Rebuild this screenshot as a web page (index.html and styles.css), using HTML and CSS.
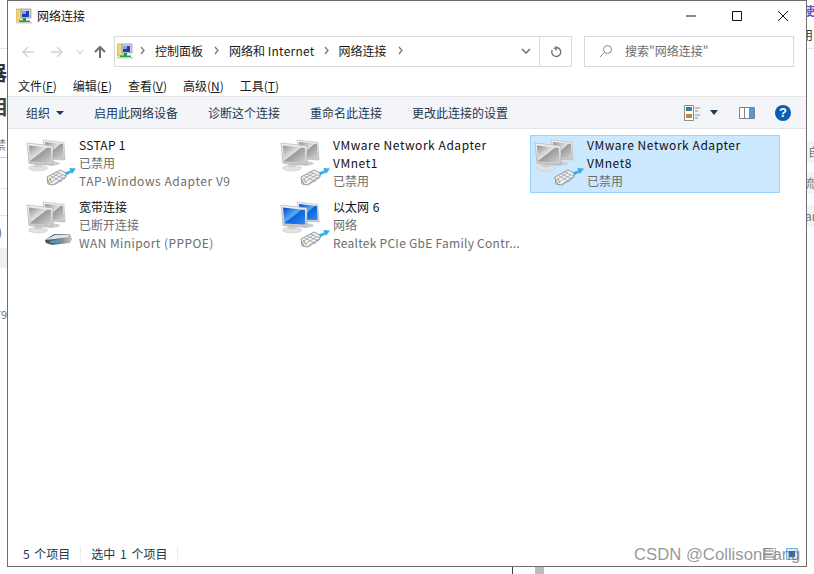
FILE: index.html
```html
<!DOCTYPE html>
<html lang="zh-CN">
<head>
<meta charset="utf-8">
<title>网络连接</title>
<link rel="stylesheet" href="styles.css">
</head>
<body>
<svg class="defs" width="0" height="0" aria-hidden="true">
  <defs>
    <linearGradient id="gScreen" x1="0" y1="0" x2="1" y2="1"><stop offset="0" stop-color="#8f8f8f"/><stop offset=".45" stop-color="#e2e2e2"/><stop offset=".5" stop-color="#9a9a9a"/><stop offset="1" stop-color="#d0d0d0"/></linearGradient>
    <linearGradient id="gBlue" x1="0" y1="0" x2="1" y2="1"><stop offset="0" stop-color="#0a3fd0"/><stop offset=".45" stop-color="#4fb0f5"/><stop offset=".52" stop-color="#0f62e0"/><stop offset="1" stop-color="#2b8df0"/></linearGradient>
    <linearGradient id="gFrame" x1="0" y1="0" x2="0" y2="1"><stop offset="0" stop-color="#f2f2f2"/><stop offset="1" stop-color="#c6c6c6"/></linearGradient>
    <linearGradient id="gModem" x1="0" y1="0" x2="1" y2="0"><stop offset="0" stop-color="#3d4a55"/><stop offset=".55" stop-color="#77838c"/><stop offset="1" stop-color="#c2c6c9"/></linearGradient>
    <symbol id="mons-gray" viewBox="0 0 54 54">
      <ellipse cx="30" cy="28.5" rx="8" ry="2.2" fill="#cfcfcf"/>
      <path d="M21 5 42 7.500 43 25 24 24Z" fill="url(#gFrame)" stroke="#b5b5b5" stroke-width=".6"/>
      <path d="M23 7 41 9 41.500 23 25 22.500Z" fill="url(#gScreen)"/>
      <ellipse cx="16" cy="33" rx="9.500" ry="3" fill="#e2e2e2" stroke="#c4c4c4" stroke-width=".5"/>
      <path d="M13 28h6l1 4h-8Z" fill="#cfcfcf"/>
      <path d="M5 8 31 11 31 30 7 28.500Z" fill="url(#gFrame)" stroke="#aaa" stroke-width=".6"/>
      <path d="M7 10.500 29 13 29 27.500 8.500 26.500Z" fill="url(#gScreen)"/>
    </symbol>
    <symbol id="mons-blue" viewBox="0 0 54 54">
      <ellipse cx="30" cy="28.5" rx="8" ry="2.2" fill="#cfcfcf"/>
      <path d="M21 5 42 7.500 43 25 24 24Z" fill="url(#gFrame)" stroke="#b5b5b5" stroke-width=".6"/>
      <path d="M23 7 41 9 41.500 23 25 22.500Z" fill="url(#gBlue)"/>
      <ellipse cx="16" cy="33" rx="9.500" ry="3" fill="#e2e2e2" stroke="#c4c4c4" stroke-width=".5"/>
      <path d="M13 28h6l1 4h-8Z" fill="#cfcfcf"/>
      <path d="M5 8 31 11 31 30 7 28.500Z" fill="url(#gFrame)" stroke="#aaa" stroke-width=".6"/>
      <path d="M7 10.500 29 13 29 27.500 8.500 26.500Z" fill="url(#gBlue)"/>
    </symbol>
    <symbol id="plug" viewBox="0 0 54 54">
      <path d="M41 38 48 35.500 47.500 33 54 33.500 50 39 49.500 37.500 43 41Z" fill="#3aaee8"/>
      <path d="M25 42 38 35 44 38 44 42 32 50 26 49Z" fill="#f1f4f6" stroke="#76828a" stroke-width=".8"/>
      <path d="M28 40.500 40 47M31 39 43 44M34 37 44 41M29 47 41 39.500M27 44.500 38 37.500M32 49 43 42" stroke="#8d99a1" stroke-width=".7" fill="none"/>
      <path d="M25.500 44 28 49M27.500 43 30 48" stroke="#b88f28" stroke-width=".9" fill="none"/>
    </symbol>
    <symbol id="modem" viewBox="0 0 54 54">
      <path d="M23 43 32 37 48 37 50 42 48 46 30 48 24 46Z" fill="url(#gModem)"/>
      <path d="M23 43 33 38 46 38 47 40 32 42 Z" fill="#dfe4e7"/>
      <path d="M28 44 40 43 40 45 29 46Z" fill="#4aa2c9"/>
    </symbol>
    <symbol id="netfolder" viewBox="0 0 16 16">
      <path d="M0 1h6l1 1h2v11H0Z" fill="#ecd67c" stroke="#b3a057" stroke-width=".6"/>
      <path d="M5 1h10v9H5Z" fill="#cfd3d8" stroke="#8b8f96" stroke-width=".7"/>
      <path d="M6 3h7v6H6Z" fill="#1f3fb8"/>
      <path d="M6 3h4v3H6Z" fill="#7ea3e6"/>
      <path d="M7 10h3v3H7Z" fill="#1e9a3c"/>
      <path d="M3 12.500h11V15H3Z" fill="#1aa845"/>
      <path d="M0 14h16v1.500H0Z" fill="#c9cdc8"/>
    </symbol>
  </defs>
</svg>

<div class="desktop">
  <div class="bg bg-left">
    <span class="frag frag-a">器</span>
    <span class="frag frag-b">相</span>
    <span class="frag frag-c">禁</span>
    <span class="frag frag-d">)</span>
    <span class="frag frag-e">79</span>
    <i class="rule rule-1"></i><i class="rule rule-2"></i><i class="rule rule-3"></i><i class="rule rule-4"></i>
    <i class="strip"></i>
  </div>
  <div class="bg bg-right">
    <span class="frag r-a">使</span>
    <span class="frag r-b">用</span>
    <i class="rule rule-r"></i>
    <span class="chip r-c">自</span>
    <span class="chip r-d">流</span>
    <span class="chip r-e">an</span>
  </div>
  <i class="stub-line"></i><i class="stub-block"></i>

  <main class="window">
    <header class="titlebar">
      <svg class="ico16"><use href="#netfolder"/></svg>
      <span class="title">网络连接</span>
      <div class="caption">
        <svg class="cap" viewBox="0 0 46 30"><path d="M18 15h10" stroke="#111" stroke-width="1"/></svg>
        <svg class="cap" viewBox="0 0 46 30"><path d="M18.500 10.500h9v9h-9z" fill="none" stroke="#111" stroke-width="1"/></svg>
        <svg class="cap" viewBox="0 0 46 30"><path d="M18 10l10 10M28 10 18 20" stroke="#111" stroke-width="1" fill="none"/></svg>
      </div>
    </header>

    <div class="navrow">
      <div class="navbtns">
        <svg class="nav" viewBox="0 0 16 16"><path d="M14 8H3M8 3 3 8l5 5" fill="none" stroke="#d4d4d4" stroke-width="1.500"/></svg>
        <svg class="nav" viewBox="0 0 16 16"><path d="M2 8h11M8 3l5 5-5 5" fill="none" stroke="#d4d4d4" stroke-width="1.500"/></svg>
        <svg class="nav-small" viewBox="0 0 8 8"><path d="M1 2.500 4 5.500 7 2.500" fill="none" stroke="#d4d4d4" stroke-width="1.200"/></svg>
        <svg class="nav" viewBox="0 0 16 16"><path d="M8 14V3M3 8l5-5 5 5" fill="none" stroke="#6e6e6e" stroke-width="2"/></svg>
      </div>
      <div class="addr">
        <svg class="ico16 addr-ico"><use href="#netfolder"/></svg>
        <svg class="chev"><path d="M2 1l3 3.500L2 8" fill="none" stroke="#7a7a7a" stroke-width="1.300"/></svg>
        <span class="crumb">控制面板</span>
        <svg class="chev"><path d="M2 1l3 3.500L2 8" fill="none" stroke="#7a7a7a" stroke-width="1.300"/></svg>
        <span class="crumb crumb-net">网络和 <span class="tracked">Internet</span></span>
        <svg class="chev"><path d="M2 1l3 3.500L2 8" fill="none" stroke="#7a7a7a" stroke-width="1.300"/></svg>
        <span class="crumb">网络连接</span>
        <svg class="chev"><path d="M2 1l3 3.500L2 8" fill="none" stroke="#7a7a7a" stroke-width="1.300"/></svg>
        <span class="grow"></span>
        <svg class="dropdown" viewBox="0 0 10 6"><path d="M1 1l4 4 4-4" fill="none" stroke="#6e6e6e" stroke-width="1.500"/></svg>
        <span class="refresh"><svg class="refresh-ico" viewBox="0 0 12 12"><path d="M6.500 1.500A4.500 4.500 0 1 1 2.200 4M6 0v3.500L3.800 1.800" fill="none" stroke="#6e6e6e" stroke-width="1.300"/></svg></span>
      </div>
      <div class="search">
        <svg class="search-ico" viewBox="0 0 14 14"><circle cx="8.500" cy="5.500" r="4" fill="none" stroke="#8a8a8a"/><path d="M5.500 8.500 1 13" stroke="#8a8a8a" fill="none"/></svg>
        <span>搜索"网络连接"</span>
      </div>
    </div>

    <nav class="menubar">
      <span>文件(<u>F</u>)</span><span>编辑(<u>E</u>)</span><span>查看(<u>V</u>)</span><span>高级(<u>N</u>)</span><span>工具(<u>T</u>)</span>
    </nav>

    <div class="toolbar">
      <span class="tool tool-org">组织<i class="caret"></i></span>
      <span class="tool">启用此网络设备</span>
      <span class="tool">诊断这个连接</span>
      <span class="tool">重命名此连接</span>
      <span class="tool">更改此连接的设置</span>
      <span class="grow"></span>
      <svg class="view-ico" viewBox="0 0 16 16"><path d="M.5.500h9v15h-9z" fill="#fff" stroke="#8d8d8d"/><path d="M2 2h6v4H2z" fill="#3e7f9f"/><path d="M2 9h3v4H2z" fill="#d9842e"/><path d="M5 9h3v4H5z" fill="#7da63c"/><path d="M11 3h5M11 6h3M11 10h5M11 13h3" stroke="#8d8d8d"/></svg>
      <i class="caret caret-view"></i>
      <svg class="pane-ico" viewBox="0 0 16 12"><path d="M.5.500h15v11H.5z" fill="#fff" stroke="#848484"/><path d="M5.500 1v10" stroke="#848484"/><path d="M10 1h5v10h-5z" fill="#4a9be2"/></svg>
      <span class="help">?</span>
    </div>

    <section class="items">
      <article class="item">
        <span class="iconbox"><svg class="big"><use href="#mons-gray"/></svg><svg class="big over"><use href="#plug"/></svg></span>
        <div class="text"><div class="name tracked-s">SSTAP 1</div><div class="sub">已禁用</div><div class="sub tracked">TAP-Windows Adapter V9</div></div>
      </article>
      <article class="item">
        <span class="iconbox"><svg class="big"><use href="#mons-gray"/></svg><svg class="big over"><use href="#plug"/></svg></span>
        <div class="text"><div class="name tracked">VMware Network Adapter VMnet1</div><div class="sub">已禁用</div></div>
      </article>
      <article class="item selected">
        <span class="iconbox"><svg class="big"><use href="#mons-gray"/></svg><svg class="big over"><use href="#plug"/></svg></span>
        <div class="text"><div class="name tracked">VMware Network Adapter VMnet8</div><div class="sub">已禁用</div></div>
      </article>
      <article class="item">
        <span class="iconbox"><svg class="big"><use href="#mons-gray"/></svg><svg class="big over"><use href="#modem"/></svg></span>
        <div class="text"><div class="name">宽带连接</div><div class="sub">已断开连接</div><div class="sub tracked-m">WAN Miniport (PPPOE)</div></div>
      </article>
      <article class="item">
        <span class="iconbox"><svg class="big"><use href="#mons-blue"/></svg><svg class="big over"><use href="#plug"/></svg></span>
        <div class="text"><div class="name name-spaced">以太网 6</div><div class="sub">网络</div><div class="sub tracked-s">Realtek PCIe GbE Family Contr...</div></div>
      </article>
    </section>

    <footer class="status">
      <span class="st st-1">5 个项目</span>
      <span class="st st-2">选中 1 个项目</span>
      <span class="grow"></span>
      <svg class="st-view" viewBox="0 0 13 12"><path d="M.5.500h12v11H.5z" fill="#fff" stroke="#b5b5b5"/><path d="M2 3h9M2 6h9M2 9h9" stroke="#7f7f7f"/></svg>
      <svg class="st-view st-view-on" viewBox="0 0 12 12"><path d="M.5.500h11v11H.5z" fill="#d5ebfb" stroke="#6fb1e0"/><path d="M3 3h6v6H3z" fill="#2b6aa8"/></svg>
    </footer>
  </main>

  <span class="watermark">CSDN @CollisonFang</span>
</div>
</body>
</html>
```
FILE: styles.css
```css
* { box-sizing: border-box; }
html, body { margin: 0; padding: 0; background: #fff; }
body { width: 814px; height: 574px; overflow: hidden; font-family: "Noto Sans CJK SC", "Noto Sans", sans-serif; font-size: 12px; color: #1a1a1a; }
.defs { position: absolute; }
.desktop { position: relative; width: 814px; height: 574px; overflow: hidden; }

.bg { position: absolute; top: 0; bottom: 0; }
.bg-left { left: 0; width: 7px; overflow: hidden; }
.bg-right { left: 807px; width: 7px; overflow: hidden; }
.frag { position: absolute; white-space: nowrap; }
.frag-a { top: 58px; left: -13px; font-size: 20px; font-weight: 700; color: #333; }
.frag-b { top: 92px; left: -13px; font-size: 20px; font-weight: 700; color: #444; }
.frag-c { top: 136px; left: -6px; color: #777; }
.frag-d { top: 223px; left: -2px; color: #555; }
.frag-e { top: 306px; left: -5px; font-size: 11px; color: #777; }
.rule { position: absolute; display: block; left: 0; width: 7px; height: 1px; background: #e6e6e6; }
.rule-1 { top: 48px; }
.rule-2 { top: 157px; background: #ccc; }
.rule-3 { top: 188px; }
.rule-4 { top: 215px; }
.strip { position: absolute; left: 0; top: 248px; width: 7px; height: 20px; background: #f0f0f0; }
.r-a { top: 2px; left: -4px; color: #6a55c8; font-weight: 700; }
.r-b { top: 26px; left: -6px; color: #333; }
.rule-r { top: 48px; }
.chip { position: absolute; left: 0; width: 7px; height: 22px; padding-left: 1px; background: #f3f3f3; color: #777; line-height: 22px; overflow: hidden; white-space: nowrap; }
.r-c { top: 141px; }
.r-d { top: 172px; left: 0; text-indent: -5px; }
.r-e { top: 205px; text-indent: -3px; }
.stub-line { position: absolute; left: 512px; top: 567px; width: 1px; height: 7px; background: #444; }
.stub-block { position: absolute; left: 535px; top: 567px; width: 9px; height: 7px; background: #bdbdbd; }

.window { position: absolute; left: 7px; top: 0; width: 800px; height: 567px; background: #fff; border: 1px solid #6f6f6f; display: flex; flex-direction: column; }

.titlebar { height: 29px; display: flex; align-items: center; padding-left: 8px; flex: none; }
.ico16 { width: 16px; height: 16px; flex: none; }
.title { margin-left: 5px; font-size: 12px; color: #111; }
.caption { margin-left: auto; display: flex; }
.cap { width: 46px; height: 30px; display: block; }

.navrow { height: 31px; margin-top: 6px; display: flex; flex: none; }
.navbtns { width: 106px; padding-left: 12px; display: flex; align-items: center; flex: none; }
.nav { width: 16px; height: 16px; flex: none; margin-right: 13px; }
.nav-small { width: 8px; height: 8px; margin-left: -2px; margin-right: 8px; flex: none; }
.nav:last-child { margin-right: 0; }
.addr { width: 458px; height: 31px; border: 1px solid #d9d9d9; display: flex; align-items: center; padding: 0 0 2px 2px; flex: none; }
.addr-ico { margin-right: 6px; }
.chev { width: 7px; height: 9px; flex: none; }
.crumb { margin: 0 10px 0 9px; color: #1a1a1a; white-space: nowrap; }
.crumb-net { margin-right: 8px; }
.tracked { letter-spacing: .55px; }
.crumb .tracked { letter-spacing: .25px; }
.tracked-m { letter-spacing: .42px; }
.tracked-s { letter-spacing: .27px; }
.grow { flex: 1; }
.dropdown { width: 10px; height: 6px; margin-right: 8px; flex: none; }
.refresh { width: 32px; height: calc(100% + 2px); margin-bottom: -2px; border-left: 1px solid #d9d9d9; display: flex; align-items: center; justify-content: center; flex: none; }
.refresh-ico { width: 12px; height: 12px; }
.search { width: 210px; height: 31px; margin-left: 12px; border: 1px solid #d9d9d9; display: flex; align-items: center; padding: 0 0 2px 14px; color: #6d6d6d; flex: none; }
.search-ico { width: 14px; height: 14px; margin-right: 12px; flex: none; }

.menubar { height: 29px; display: flex; align-items: center; padding: 7px 0 0 10px; gap: 16px; flex: none; color: #1a1a1a; }

.toolbar { height: 33px; background: #f3f5f8; border-top: 1px solid #e3e5e8; border-bottom: 1px solid #e3e5e8; display: flex; align-items: center; padding-left: 18px; flex: none; color: #24364d; }
.tool { margin-right: 30px; white-space: nowrap; }
.tool-org { display: flex; align-items: center; }
.caret { display: block; width: 0; height: 0; border: 4px solid transparent; border-top: 4px solid #1c3a5e; border-bottom: 0; }
.tool-org .caret { margin-left: 6px; }
.caret-view { margin-left: 10px; border-width: 5px 4px 0; }
.view-ico { width: 16px; height: 16px; flex: none; }
.pane-ico { width: 16px; height: 12px; margin-left: 21px; flex: none; }
.help { width: 16px; height: 16px; margin-left: 20px; margin-right: 15px; border-radius: 50%; background: #0a5fb4; color: #fff; font: 700 13px/16px "Liberation Sans", sans-serif; text-align: center; flex: none; }

.items { flex: 1; padding: 6px 0 0 14px; display: grid; grid-template-columns: repeat(3, 250px); grid-auto-rows: 58px; column-gap: 4px; row-gap: 4px; align-content: start; }
.item { border: 1px solid transparent; display: flex; }
.item.selected { background: #cce8ff; border-color: #99d1ff; }
.iconbox { position: relative; width: 56px; height: 54px; flex: none; }
.big { position: absolute; left: -1px; top: -1px; width: 54px; height: 54px; }
.text { width: 190px; line-height: 18px; }
.name { color: #111; }
.name-spaced { word-spacing: 1px; }
.sub { color: #6d6d6d; white-space: nowrap; }

.status { height: 24px; display: flex; align-items: center; padding-left: 15px; flex: none; color: #24364d; word-spacing: 2px; }
.st { white-space: nowrap; }
.st-1 { padding-right: 10px; border-right: 1px solid #ececec; line-height: 16px; }
.st-2 { margin-left: 10px; padding-right: 10px; border-right: 1px solid #ececec; line-height: 16px; }
.st-view { width: 13px; height: 12px; flex: none; margin-right: 10px; }
.st-view-on { width: 12px; margin-right: 8px; }

.watermark { position: absolute; left: 634px; top: 545px; font: 16.7px/20px "Liberation Sans", sans-serif; color: rgba(110,110,110,.72); white-space: nowrap; }
```
